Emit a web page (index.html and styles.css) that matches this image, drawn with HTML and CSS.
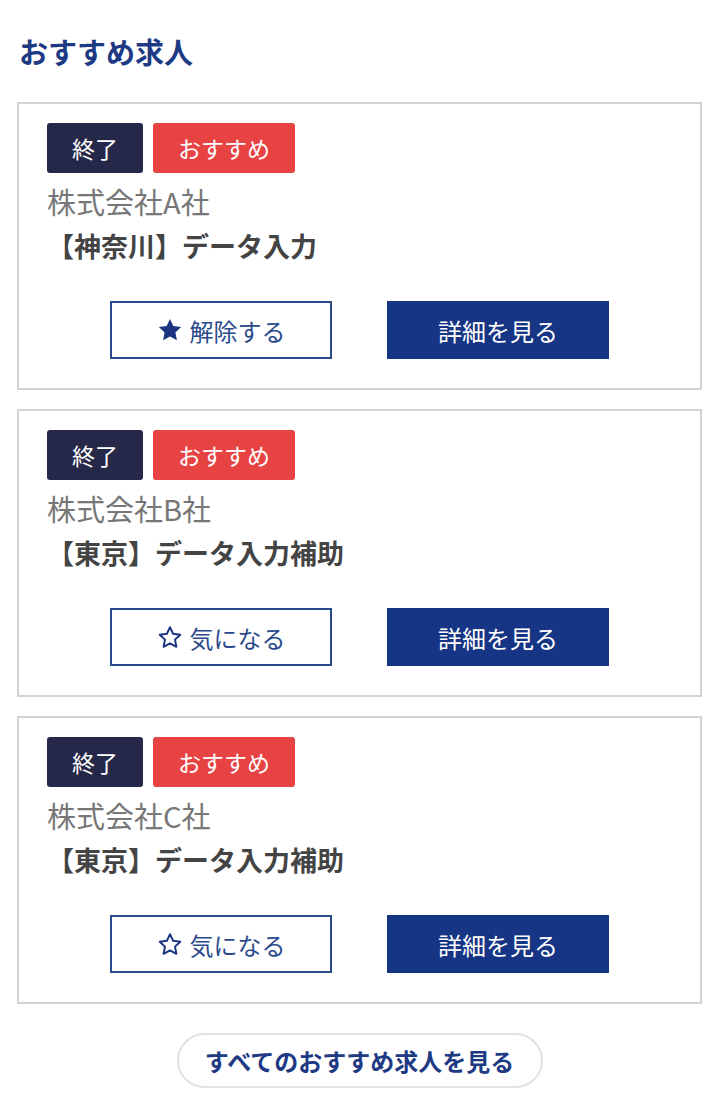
FILE: index.html
```html
<!DOCTYPE html>
<html lang="ja">
<head>
<meta charset="utf-8">
<link rel="stylesheet" href="styles.css">
</head>
<body>
<section class="recommend">
  <h2 class="heading">おすすめ求人</h2>
  <div class="cards">
    <article class="card">
      <div class="tags"><span class="tag tag-end">終了</span><span class="tag tag-rec">おすすめ</span></div>
      <p class="company">株式会社A社</p>
      <h3 class="title">【神奈川】データ入力</h3>
      <div class="actions">
        <button class="btn btn-outline"><svg class="star" viewBox="0 0 24 24"><path d="M12 1.8l3.1 6.6 7.2.9-5.3 5 1.4 7.1L12 17.9l-6.4 3.5L7 14.3l-5.3-5 7.2-.9z" fill="#1b3580"/></svg>解除する</button>
        <button class="btn btn-solid">詳細を見る</button>
      </div>
    </article>
    <article class="card">
      <div class="tags"><span class="tag tag-end">終了</span><span class="tag tag-rec">おすすめ</span></div>
      <p class="company">株式会社B社</p>
      <h3 class="title">【東京】データ入力補助</h3>
      <div class="actions">
        <button class="btn btn-outline"><svg class="star" viewBox="0 0 24 24"><path d="M12 2.9l2.85 6.1 6.65.85-4.9 4.6 1.3 6.6L12 17.8l-5.9 3.25 1.3-6.6-4.9-4.6 6.65-.85z" fill="none" stroke="#1b3580" stroke-width="1.8" stroke-linejoin="round"/></svg>気になる</button>
        <button class="btn btn-solid">詳細を見る</button>
      </div>
    </article>
    <article class="card">
      <div class="tags"><span class="tag tag-end">終了</span><span class="tag tag-rec">おすすめ</span></div>
      <p class="company">株式会社C社</p>
      <h3 class="title">【東京】データ入力補助</h3>
      <div class="actions">
        <button class="btn btn-outline"><svg class="star" viewBox="0 0 24 24"><path d="M12 2.9l2.85 6.1 6.65.85-4.9 4.6 1.3 6.6L12 17.8l-5.9 3.25 1.3-6.6-4.9-4.6 6.65-.85z" fill="none" stroke="#1b3580" stroke-width="1.8" stroke-linejoin="round"/></svg>気になる</button>
        <button class="btn btn-solid">詳細を見る</button>
      </div>
    </article>
  </div>
  <div class="more-wrap"><a class="more" href="#">すべてのおすすめ求人を見る</a></div>
</section>
</body>
</html>
```

FILE: styles.css
```css
* { box-sizing: border-box; }
html, body { margin: 0; padding: 0; background: #fff; }
body {
  font-family: "Noto Sans CJK JP", "Noto Sans", sans-serif;
  color: #444;
}
.recommend { padding: 31px 16px 0 17px; }
.heading {
  margin: 0 0 0 2px;
  font-size: 29px;
  line-height: 40px;
  font-weight: 700;
  color: #1e3a84;
}
.cards {
  margin-top: 31px;
  display: flex;
  flex-direction: column;
  gap: 19px;
}
.card {
  border: 2px solid #d3d3d3;
  padding: 19px 28px 29px 28px;
}
.tags { display: flex; gap: 10px; }
.tag {
  height: 50px;
  line-height: 50px;
  padding: 0 25px;
  border-radius: 3px;
  font-size: 23px;
  color: #fff;
}
.tag-end { background: #262849; }
.tag-rec { background: #e84343; }
.company {
  margin: 9px 0 0;
  font-size: 29px;
  line-height: 38px;
  color: #777;
}
.title {
  margin: 7px 0 0;
  font-size: 27px;
  line-height: 38px;
  font-weight: 700;
  color: #444;
}
.actions {
  margin-top: 36px;
  display: flex;
  justify-content: center;
  gap: 55px;
}
.btn {
  width: 222px;
  height: 58px;
  font-family: inherit;
  font-size: 24px;
  display: flex;
  align-items: center;
  justify-content: center;
  gap: 7px;
  cursor: pointer;
}
.btn-outline {
  background: #fff;
  border: 2px solid #2a4a8c;
  color: #2a4a8c;
}
.btn-solid {
  background: #163585;
  border: none;
  color: #fff;
}
.star { width: 26px; height: 26px; flex: none; }
.more-wrap {
  display: flex;
  justify-content: center;
  margin-top: 29px;
  padding-bottom: 20px;
}
.more {
  width: 366px;
  height: 55px;
  border: 2px solid #e2e2e2;
  border-radius: 28px;
  display: flex;
  align-items: center;
  justify-content: center;
  font-size: 24px;
  font-weight: 700;
  color: #1e3a84;
  text-decoration: none;
}
```
